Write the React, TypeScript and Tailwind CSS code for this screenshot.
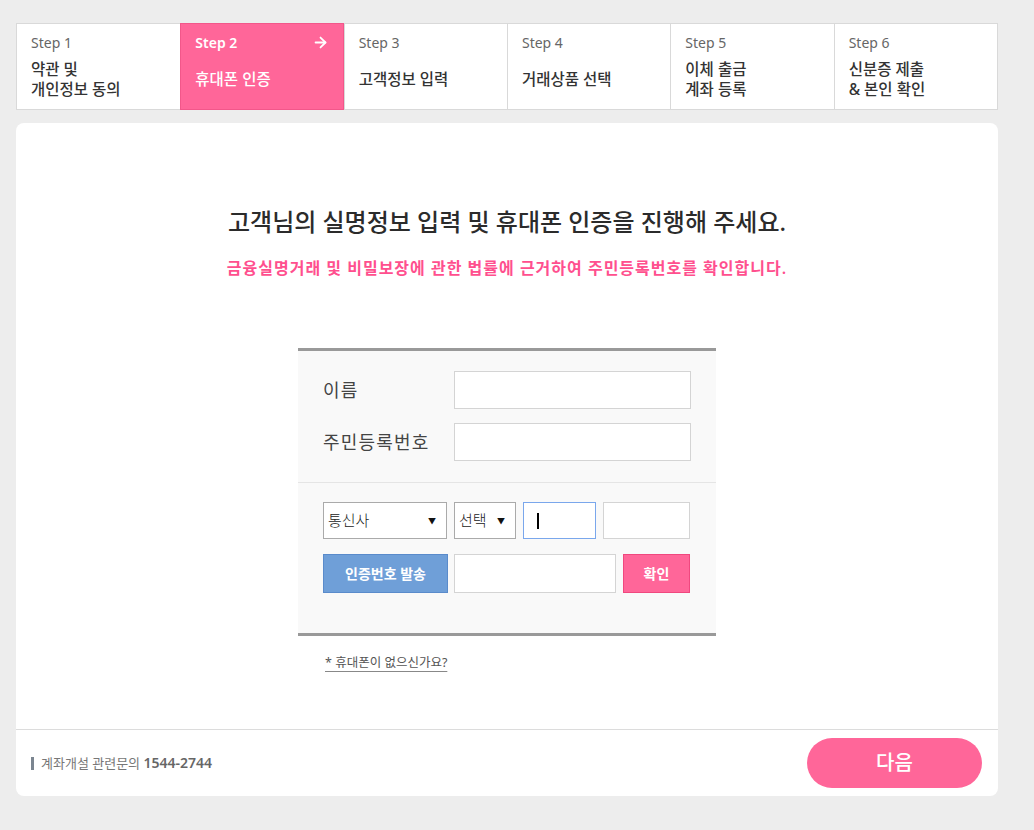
import { ArrowRight } from "lucide-react";

const steps = [
  { no: "Step 1", label: ["약관 및", "개인정보 동의"] },
  { no: "Step 2", label: ["휴대폰 인증"] },
  { no: "Step 3", label: ["고객정보 입력"] },
  { no: "Step 4", label: ["거래상품 선택"] },
  { no: "Step 5", label: ["이체 출금", "계좌 등록"] },
  { no: "Step 6", label: ["신분증 제출", "& 본인 확인"] },
];

const font = "font-['Noto_Sans','Noto_Sans_CJK_KR',sans-serif]";

const StepBar = ({ active }: { active: number }) => {
  return (
    <div className="grid grid-cols-6 h-[87px] border border-[#d9d9d9] bg-white">
      {steps.map((s, i) => {
        const on = i === active;
        return (
          <div
            key={s.no}
            className={
              on
                ? "-my-px bg-[#ff6699] border border-[#f2578a] pl-[14px] pr-[14px] pt-[8px] text-white"
                : "border-l border-[#d9d9d9] first:border-l-0 pl-[14px] pt-[8px] text-[#333]"
            }
          >
            <div className="flex items-center justify-between h-[20px]">
              <span className={on ? "text-[14px] font-semibold" : "text-[14px] text-[#666]"}>{s.no}</span>
              {on && <ArrowRight size={17} strokeWidth={2.5} />}
            </div>
            <div
              className={
                "mt-[7px] text-[15.5px] font-medium leading-[20px] " +
                (s.label.length === 1 ? "pt-[10px]" : "")
              }
            >
              {s.label.map((l) => (
                <div key={l}>{l}</div>
              ))}
            </div>
          </div>
        );
      })}
    </div>
  );
};

const Field = ({ label }: { label: string }) => (
  <div className="flex items-center">
    <div className="w-[132px] text-[18px] tracking-[1.2px] text-[#444]">{label}</div>
    <div className="w-[238px] h-[38px] bg-white border border-[#d4d4d4]" />
  </div>
);

const SelectBox = ({ text, w }: { text: string; w: string }) => (
  <div className={`${w} h-[37px] bg-white border border-[#aaa] flex items-center justify-between pl-[4px] pr-[10px]`}>
    <span className="text-[15px] font-light text-[#222]">{text}</span>
    <span className="text-[8px] text-[#111]">▼</span>
  </div>
);

export default function App() {
  return (
    <div className={`min-h-[830px] bg-[#ededed] px-[16px] pt-[23px] pb-[34px] ${font}`}>
      <div className="w-[982px]">
        <StepBar active={1} />

        <div className="mt-[13px] bg-white rounded-[8px] h-[673px] flex flex-col">
          <div className="flex-1 flex flex-col items-center pt-[81px]">
            <h1 className="text-[24px] font-medium text-[#2b2b2b] leading-[36px]">
              고객님의 실명정보 입력 및 휴대폰 인증을 진행해 주세요.
            </h1>
            <p className="mt-[16px] text-[16px] tracking-[1px] font-semibold text-[#ff4f8e]">
              금융실명거래 및 비밀보장에 관한 법률에 근거하여 주민등록번호를 확인합니다.
            </p>

            <div className="mt-[68px] w-[418px] bg-[#f9f9f9] border-t-[3px] border-b-[3px] border-[#999]">
              <div className="px-[25px] pt-[20px] pb-[21px] flex flex-col gap-[14px]">
                <Field label="이름" />
                <Field label="주민등록번호" />
              </div>
              <div className="border-t border-[#e5e5e5] px-[25px] pt-[19px] pb-[40px] flex flex-col gap-[15px]">
                <div className="flex gap-[7px]">
                  <SelectBox text="통신사" w="w-[124px]" />
                  <SelectBox text="선택" w="w-[62px]" />
                  <div className="w-[73px] h-[37px] bg-white border border-[#7aa7ec] flex items-center pl-[13px]">
                    <span className="w-[2px] h-[16px] bg-black" />
                  </div>
                  <div className="w-[87px] h-[37px] bg-white border border-[#d4d4d4]" />
                </div>
                <div className="flex gap-[6px]">
                  <button className="w-[125px] h-[39px] bg-[#6f9fd8] border border-[#5a8bcb] text-white text-[14px] font-bold">
                    인증번호 발송
                  </button>
                  <div className="w-[162px] h-[39px] bg-white border border-[#d4d4d4]" />
                  <button className="ml-[1px] w-[67px] h-[39px] bg-[#ff6699] border border-[#f0487f] text-white text-[14px] font-bold">
                    확인
                  </button>
                </div>
              </div>
            </div>

            <div className="w-[418px] pl-[27px] mt-[13px]">
              <a className="text-[12.5px] text-[#555] underline underline-offset-[4px] decoration-[#888]">
                * 휴대폰이 없으신가요?
              </a>
            </div>
          </div>

          <div className="h-[67px] border-t border-[#dcdcdc] flex items-center justify-between pl-[15px] pr-[16px]">
            <div className="flex items-center gap-[7px] text-[13px] text-[#777]">
              <span className="w-[3px] h-[13px] bg-[#7b8590]" />
              <span>
                계좌개설 관련문의 <span className="font-semibold text-[#666] text-[14px]">1544-2744</span>
              </span>
            </div>
            <button className="w-[175px] h-[50px] rounded-full bg-[#ff6699] text-white text-[20px] font-medium">
              다음
            </button>
          </div>
        </div>
      </div>
    </div>
  );
}
